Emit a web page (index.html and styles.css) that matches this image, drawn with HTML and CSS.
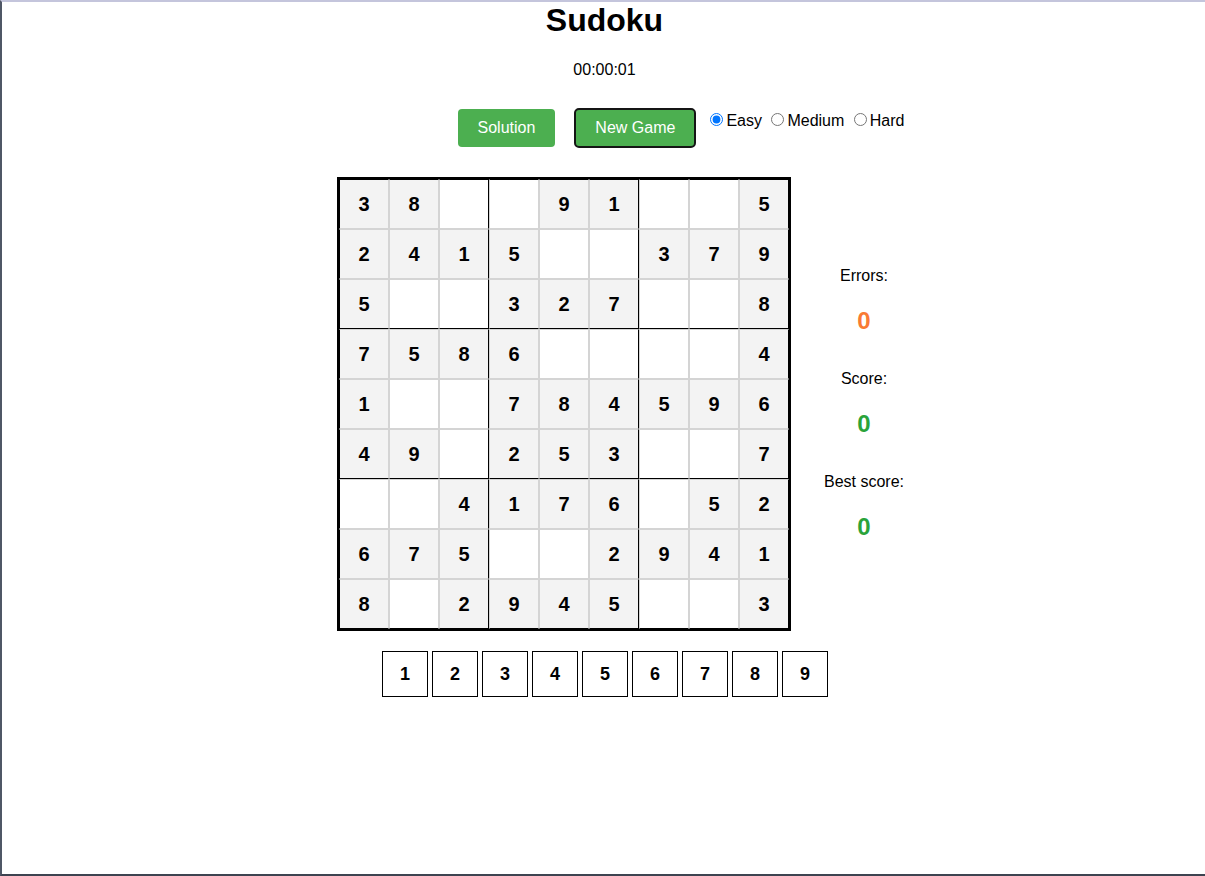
FILE: index.html
```html
<!DOCTYPE html>
<html lang="en">
<head>
<meta charset="utf-8">
<title>Sudoku</title>
<link rel="stylesheet" href="styles.css">
</head>
<body>
<div class="frame">
  <h1 class="title">Sudoku</h1>
  <div class="timer">00:00:01</div>
  <div class="controls">
    <button class="btn btn-solution">Solution</button>
    <button class="btn btn-new">New Game</button>
    <div class="levels">
      <input type="radio" name="level" id="easy" checked><label for="easy">Easy</label>
      <input type="radio" name="level" id="medium"><label for="medium">Medium</label>
      <input type="radio" name="level" id="hard"><label for="hard">Hard</label>
    </div>
  </div>
  <div class="game">
    <div class="board">
      <div class="cell given">3</div><div class="cell given">8</div><div class="cell"></div><div class="cell"></div><div class="cell given">9</div><div class="cell given">1</div><div class="cell"></div><div class="cell"></div><div class="cell given">5</div>
      <div class="cell given">2</div><div class="cell given">4</div><div class="cell given">1</div><div class="cell given">5</div><div class="cell"></div><div class="cell"></div><div class="cell given">3</div><div class="cell given">7</div><div class="cell given">9</div>
      <div class="cell given">5</div><div class="cell"></div><div class="cell"></div><div class="cell given">3</div><div class="cell given">2</div><div class="cell given">7</div><div class="cell"></div><div class="cell"></div><div class="cell given">8</div>
      <div class="cell given">7</div><div class="cell given">5</div><div class="cell given">8</div><div class="cell given">6</div><div class="cell"></div><div class="cell"></div><div class="cell"></div><div class="cell"></div><div class="cell given">4</div>
      <div class="cell given">1</div><div class="cell"></div><div class="cell"></div><div class="cell given">7</div><div class="cell given">8</div><div class="cell given">4</div><div class="cell given">5</div><div class="cell given">9</div><div class="cell given">6</div>
      <div class="cell given">4</div><div class="cell given">9</div><div class="cell"></div><div class="cell given">2</div><div class="cell given">5</div><div class="cell given">3</div><div class="cell"></div><div class="cell"></div><div class="cell given">7</div>
      <div class="cell"></div><div class="cell"></div><div class="cell given">4</div><div class="cell given">1</div><div class="cell given">7</div><div class="cell given">6</div><div class="cell"></div><div class="cell given">5</div><div class="cell given">2</div>
      <div class="cell given">6</div><div class="cell given">7</div><div class="cell given">5</div><div class="cell"></div><div class="cell"></div><div class="cell given">2</div><div class="cell given">9</div><div class="cell given">4</div><div class="cell given">1</div>
      <div class="cell given">8</div><div class="cell"></div><div class="cell given">2</div><div class="cell given">9</div><div class="cell given">4</div><div class="cell given">5</div><div class="cell"></div><div class="cell"></div><div class="cell given">3</div>
    </div>
    <div class="stats">
      <div class="stat">
        <div class="stat-label">Errors:</div>
        <div class="stat-value errors">0</div>
      </div>
      <div class="stat">
        <div class="stat-label">Score:</div>
        <div class="stat-value good">0</div>
      </div>
      <div class="stat">
        <div class="stat-label">Best score:</div>
        <div class="stat-value good">0</div>
      </div>
    </div>
  </div>
  <div class="numpad">
    <button class="num">1</button>
    <button class="num">2</button>
    <button class="num">3</button>
    <button class="num">4</button>
    <button class="num">5</button>
    <button class="num">6</button>
    <button class="num">7</button>
    <button class="num">8</button>
    <button class="num">9</button>
  </div>
</div>
</body>
</html>
```
FILE: styles.css
```css
html, body {
  margin: 0;
  padding: 0;
  background: #fff;
}

body {
  font-family: "Liberation Sans", Arial, sans-serif;
  font-size: 16px;
  color: #000;
}

.frame {
  box-sizing: border-box;
  height: 876px;
  border-top: 2px solid #c4c5dc;
  border-left: 2px solid #4f5766;
  border-bottom: 2px solid #3d4350;
  overflow: hidden;
}

.title {
  margin: 0;
  font-size: 32px;
  line-height: 37px;
  font-weight: bold;
  text-align: center;
  padding-left: 2px;
}

.timer {
  margin-top: 22px;
  line-height: 18px;
  text-align: center;
  padding-left: 2px;
}

.controls {
  margin-top: 29px;
  display: flex;
  justify-content: center;
  align-items: flex-start;
  padding-left: 155px;
}

.btn {
  font-family: "Liberation Sans", Arial, sans-serif;
  font-size: 16px;
  line-height: 18px;
  color: #fff;
  background: #4caf50;
  border: none;
  border-radius: 4px;
  padding: 10px 20px;
  cursor: pointer;
}

.btn-solution {
  margin-top: 1px;
  margin-right: 19px;
}

.btn-new {
  border: 2px solid #151515;
  padding: 9px 19px;
  border-radius: 5px;
  margin-right: 9px;
}

.levels {
  margin-top: 2px;
  line-height: 18px;
  white-space: nowrap;
}

.levels input {
  margin: 3px 3px 0 5px;
  width: 13px;
  height: 13px;
}

.game {
  margin-top: 29px;
  display: flex;
  justify-content: center;
  align-items: center;
  padding-left: 44px;
}

.board {
  display: grid;
  grid-template-columns: repeat(9, 50px);
  grid-template-rows: repeat(9, 50px);
  border: 2px solid #000;
}

.cell {
  box-sizing: border-box;
  border: 1px solid #d4d4d4;
  display: flex;
  align-items: center;
  justify-content: center;
  font-size: 20px;
  font-weight: bold;
  background: #fff;
}

.cell.given {
  background: #f3f3f3;
}

.cell:nth-child(3n) {
  border-right-color: #000;
}

.cell:nth-child(9n+1) {
  border-left-color: #000;
}

.cell:nth-child(-n+9) {
  border-top-color: #000;
}

.cell:nth-child(n+19):nth-child(-n+27),
.cell:nth-child(n+46):nth-child(-n+54),
.cell:nth-child(n+73) {
  border-bottom-color: #000;
}

.stats {
  width: 100px;
  margin-left: 23px;
  display: flex;
  flex-direction: column;
  align-items: center;
  gap: 35px;
}

.stat {
  display: flex;
  flex-direction: column;
  align-items: center;
}

.stat-label {
  line-height: 18px;
  white-space: nowrap;
}

.stat-value {
  margin-top: 22px;
  font-size: 24px;
  line-height: 28px;
  font-weight: bold;
}

.stat-value.errors {
  color: #f97a34;
}

.stat-value.good {
  color: #2aa33a;
}

.numpad {
  margin-top: 20px;
  display: flex;
  justify-content: center;
  gap: 4px;
  padding-left: 3px;
}

.num {
  box-sizing: border-box;
  width: 46px;
  height: 46px;
  padding: 0;
  background: #fff;
  border: 1px solid #000;
  font-family: "Liberation Sans", Arial, sans-serif;
  font-size: 18px;
  font-weight: bold;
  color: #000;
  cursor: pointer;
}
```
